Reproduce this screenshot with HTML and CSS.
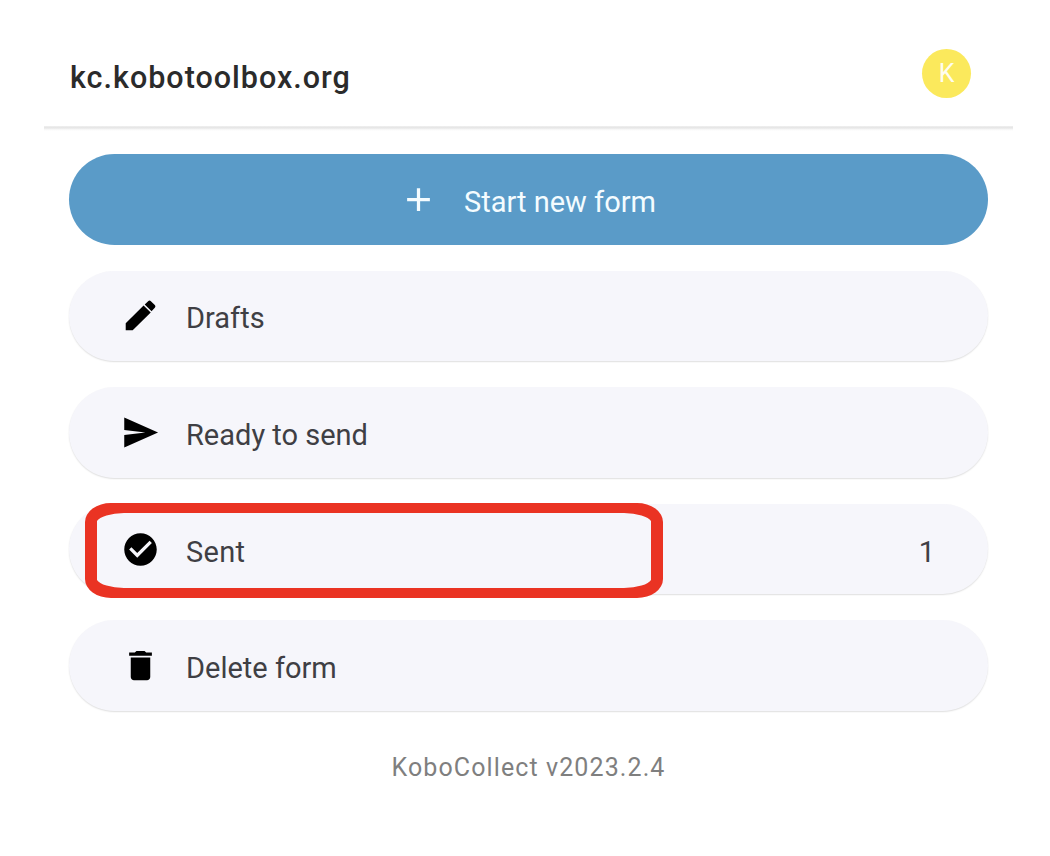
FILE: index.html
```html
<!DOCTYPE html>
<html lang="en">
<head>
<meta charset="utf-8">
<title>KoboCollect</title>
<link rel="stylesheet" href="styles.css">
</head>
<body>
<main class="screen">
  <header class="topbar">
    <h1 class="title">kc.kobotoolbox.org</h1>
    <div class="avatar">K</div>
  </header>
  <div class="divider"></div>
  <nav class="menu">
    <button class="pill primary">
      <svg class="icon" viewBox="0 0 24 24"><path d="M19 13h-6v6h-2v-6H5v-2h6V5h2v6h6v2z"/></svg>
      <span class="label">Start new form</span>
    </button>
    <button class="pill">
      <svg class="icon" viewBox="0 0 24 24"><path d="M2.900 16.700V21.100h4.300L18.300 10.200l-4.400-4.400L2.900 16.700zM20.800 7.300c.5-.5.5-1.200 0-1.700l-2.400-2.400c-.5-.5-1.200-.5-1.700 0l-2.100 2.100 4.200 4.100 2-2.100z"/></svg>
      <span class="label">Drafts</span>
    </button>
    <button class="pill">
      <svg class="icon" viewBox="0 0 24 24"><path d="M2 21.200L22.800 12 2 2.800V10.500l13 1.500-13 1.500z"/></svg>
      <span class="label">Ready to send</span>
    </button>
    <button class="pill">
      <svg class="icon" viewBox="0 0 24 24"><path d="M12 2C6.480 2 2 6.480 2 12s4.480 10 10 10 10-4.480 10-10S17.520 2 12 2zm-2 15l-5-5 1.410-1.410L10 14.170l7.590-7.590L19 8l-9 9z"/></svg>
      <span class="label sent">Sent</span>
      <span class="count">1</span>
      <svg class="highlight" viewBox="0 0 578 95"><path fill-rule="evenodd" d="M26 0H552A26 19 0 0 1 578 19V76A26 19 0 0 1 552 95H26A26 19 0 0 1 0 76V19A26 19 0 0 1 26 0ZM39 10A29 10 0 0 0 12 18V77A29 10 0 0 0 39 85H539A29 10 0 0 0 566 77V18A29 10 0 0 0 539 10Z"/></svg>
    </button>
    <button class="pill">
      <svg class="icon" viewBox="0 0 24 24"><path d="M6 19c0 1.100.9 2 2 2h8c1.100 0 2-.9 2-2V7H6v12zM19 4h-3.500l-1-1h-5l-1 1H5v2h14V4z"/></svg>
      <span class="label">Delete form</span>
    </button>
  </nav>
  <footer class="version">KoboCollect v2023.2.4</footer>
</main>
</body>
</html>
```
FILE: styles.css
```css
* { box-sizing: border-box; }
body {
  margin: 0;
  background: #fff;
  font-family: Roboto, "Liberation Sans", sans-serif;
  color: #3f3f44;
}
.screen {
  width: 969px;
  height: 856px;
  margin-left: 44px;
  padding-top: 27px;
}
.topbar {
  display: flex;
  align-items: center;
  justify-content: space-between;
  height: 99px;
  padding: 0 42px 0 25px;
}
.divider {
  height: 5px;
  background: linear-gradient(#f0f0f0, #e5e5e5 35%, #f7f7f7 70%, #fff);
}
.title {
  margin: 2px 0 0 1px;
  color: #2b2b2b;
  font-size: 30.500px;
  font-weight: 500;
  letter-spacing: 1px;
  line-height: 36px;
}
.avatar {
  width: 49px;
  height: 49px;
  margin-top: -6px;
  border-radius: 50%;
  background: #fbe95c;
  color: #fffdf0;
  font-size: 25px;
  line-height: 50px;
  text-align: center;
}
.menu {
  display: flex;
  flex-direction: column;
  gap: 26px;
  padding: 23px 25px 0;
}
.pill {
  position: relative;
  display: flex;
  align-items: center;
  height: 90.600px;
  padding: 0 53px 0 52px;
  border: 0;
  border-radius: 46px;
  background: #f6f6fb;
  box-shadow: 0 1px 1.500px rgba(0, 0, 0, .13);
  color: inherit;
  font: 400 29px/34px Roboto, "Liberation Sans", sans-serif;
  text-align: left;
}
.primary {
  padding-left: 330px;
  background: #5a9bc8;
  box-shadow: none;
  color: #f4fcff;
}
.icon {
  flex: none;
  width: 39px;
  height: 39px;
  fill: #000;
}
.primary .icon { fill: #f4fcff; }
.label { margin: 5px 0 0 26px; white-space: nowrap; }
.sent { letter-spacing: .3px; }
.count { margin: 5px 0 0 auto; }
.highlight {
  position: absolute;
  left: 16px;
  top: -1px;
  width: 578px;
  height: 95px;
  fill: #ea3323;
}
.version {
  margin-top: 42px;
  color: #7f7f7f;
  font-size: 25px;
  letter-spacing: 1.100px;
  line-height: 30px;
  text-align: center;
}
```
